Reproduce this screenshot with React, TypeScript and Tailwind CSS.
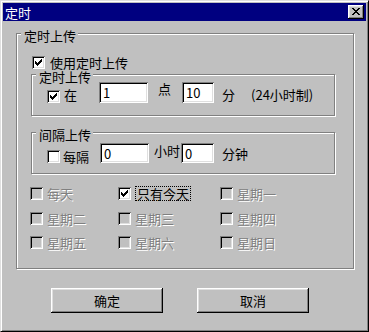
import React from "react";

const sunken =
  "shadow-[inset_1px_1px_0_#808080,inset_-1px_-1px_0_#ffffff,inset_2px_2px_0_#000000,inset_-2px_-2px_0_#dfdfdf]";
const raised =
  "shadow-[inset_-1px_-1px_0_#000000,inset_1px_1px_0_#ffffff,inset_-2px_-2px_0_#808080,inset_2px_2px_0_#dfdfdf]";

function Check({ checked, disabled }: { checked?: boolean; disabled?: boolean }) {
  return (
    <div
      className={`relative w-[13px] h-[13px] shrink-0 ${sunken} ${
        disabled ? "bg-[#c0c0c0]" : "bg-white"
      }`}
    >
      {checked && (
        <svg
          width="7"
          height="7"
          viewBox="0 0 7 7"
          className="absolute left-[3px] top-[3px]"
          shapeRendering="crispEdges"
        >
          <path
            fill={disabled ? "#808080" : "#000"}
            d="M6 0h1v1h-1z M5 1h2v1h-2z M0 2h1v1h-1z M4 2h3v1h-3z M0 3h2v1h-2z M3 3h3v1h-3z M0 4h5v1h-5z M1 5h3v1h-3z M2 6h1v1h-1z"
          />
        </svg>
      )}
    </div>
  );
}

function Field({ value, w, h }: { value: string; w: string; h: string }) {
  return (
    <div
      className={`${w} ${h} bg-white ${sunken} flex items-center pl-[4px] text-[13px] leading-[13px] text-black`}
    >
      {value}
    </div>
  );
}

function Group({
  label,
  className,
  children,
}: {
  label: string;
  className: string;
  children?: React.ReactNode;
}) {
  return (
    <div
      className={`relative border border-[#808080] shadow-[inset_1px_1px_0_#ffffff,1px_1px_0_#ffffff] ${className}`}
    >
      <span className="absolute left-[4px] top-[-4px] bg-[#c0c0c0] pl-[3px] pr-[2px] text-[13px] leading-[12px] text-black">
        {label}
      </span>
      {children}
    </div>
  );
}

function DayBox({
  label,
  checked,
  disabled,
  focus,
}: {
  label: string;
  checked?: boolean;
  disabled?: boolean;
  focus?: boolean;
}) {
  return (
    <div className="flex items-center">
      <Check checked={checked} disabled={disabled} />
      {focus ? (
        <span className="ml-[4px] border border-dotted border-black px-[1px] text-[13px] leading-[13px] text-black">
          {label}
        </span>
      ) : (
        <span
          className={`ml-[4px] text-[13px] leading-[13px] ${
            disabled ? "text-[#808080] [text-shadow:1px_1px_0_#ffffff]" : "text-black"
          }`}
        >
          {label}
        </span>
      )}
    </div>
  );
}

export default function App() {
  return (
    <div className="w-[369px] h-[332px] bg-[#c0c0c0] border border-t-[#dfdfdf] border-l-[#dfdfdf] border-r-black border-b-black shadow-[inset_1px_1px_0_#ffffff,inset_-1px_-1px_0_#808080] p-[2px] font-['Noto_Sans_CJK_SC','Liberation_Sans',sans-serif] select-none">
      {/* title bar */}
      <div className="h-[18px] bg-[#000080] flex items-center justify-between pl-[2px] pr-[2px]">
        <span className="text-white text-[13px] leading-[13px]">定时</span>
        <div className={`relative w-[16px] h-[14px] bg-[#c0c0c0] ${raised}`}>
          <svg
            width="8"
            height="7"
            viewBox="0 0 8 7"
            className="absolute left-[4px] top-[3px]"
            shapeRendering="crispEdges"
          >
            <path
              fill="#000"
              d="M0 0h2v1h-2z M6 0h2v1h-2z M1 1h2v1h-2z M5 1h2v1h-2z M2 2h4v1h-4z M3 3h2v1h-2z M2 4h4v1h-4z M1 5h2v1h-2z M5 5h2v1h-2z M0 6h2v1h-2z M6 6h2v1h-2z"
            />
          </svg>
        </div>
      </div>

      {/* outer group */}
      <Group label="定时上传" className="ml-[13px] mt-[12px] w-[338px] h-[236px]">
        <div className="flex flex-col">
          <div className="flex items-center ml-[15px] mt-[22px]">
            <Check checked />
            <span className="ml-[5px] text-[13px] leading-[13px] text-black">
              使用定时上传
            </span>
          </div>

          <Group label="定时上传" className="ml-[14px] mt-[5px] w-[304px] h-[42px]">
            <div className="flex items-start text-[13px] leading-[13px] text-black">
              <div className="ml-[15px] mt-[15px]">
                <Check checked />
              </div>
              <span className="ml-[4px] mt-[13px]">在</span>
              <div className="ml-[22px] mt-[7px]">
                <Field value="1" w="w-[49px]" h="h-[21px]" />
              </div>
              <span className="ml-[10px] mt-[7px]">点</span>
              <div className="ml-[11px] mt-[7px]">
                <Field value="10" w="w-[32px]" h="h-[21px]" />
              </div>
              <span className="ml-[8px] mt-[13px]">分</span>
              <span className="ml-[16px] mt-[13px]">(24小时制)</span>
            </div>
          </Group>

          <Group label="间隔上传" className="ml-[14px] mt-[16px] w-[304px] h-[42px]">
            <div className="flex items-start text-[13px] leading-[13px] text-black">
              <div className="ml-[15px] mt-[17px]">
                <Check />
              </div>
              <span className="ml-[3px] mt-[17px]">每隔</span>
              <div className="ml-[11px] mt-[10px]">
                <Field value="0" w="w-[49px]" h="h-[20px]" />
              </div>
              <span className="ml-[5px] mt-[11px]">小时</span>
              <div className="ml-[1px] mt-[10px]">
                <Field value="0" w="w-[33px]" h="h-[20px]" />
              </div>
              <span className="ml-[8px] mt-[14px]">分钟</span>
            </div>
          </Group>

          <div className="ml-[13px] mt-[12px] grid grid-cols-[88px_102px_auto] gap-y-[11px]">
            <DayBox label="每天" disabled />
            <DayBox label="只有今天" checked focus />
            <DayBox label="星期一" disabled />
            <DayBox label="星期二" disabled />
            <DayBox label="星期三" disabled />
            <DayBox label="星期四" disabled />
            <DayBox label="星期五" disabled />
            <DayBox label="星期六" disabled />
            <DayBox label="星期日" disabled />
          </div>
        </div>
      </Group>

      {/* buttons */}
      <div className="flex ml-[48px] mt-[19px] gap-[34px]">
        <button
          className={`w-[112px] h-[25px] bg-[#c0c0c0] ${raised} text-[13px] leading-[13px] text-black`}
        >
          确定
        </button>
        <button
          className={`w-[112px] h-[25px] bg-[#c0c0c0] ${raised} text-[13px] leading-[13px] text-black`}
        >
          取消
        </button>
      </div>
    </div>
  );
}
